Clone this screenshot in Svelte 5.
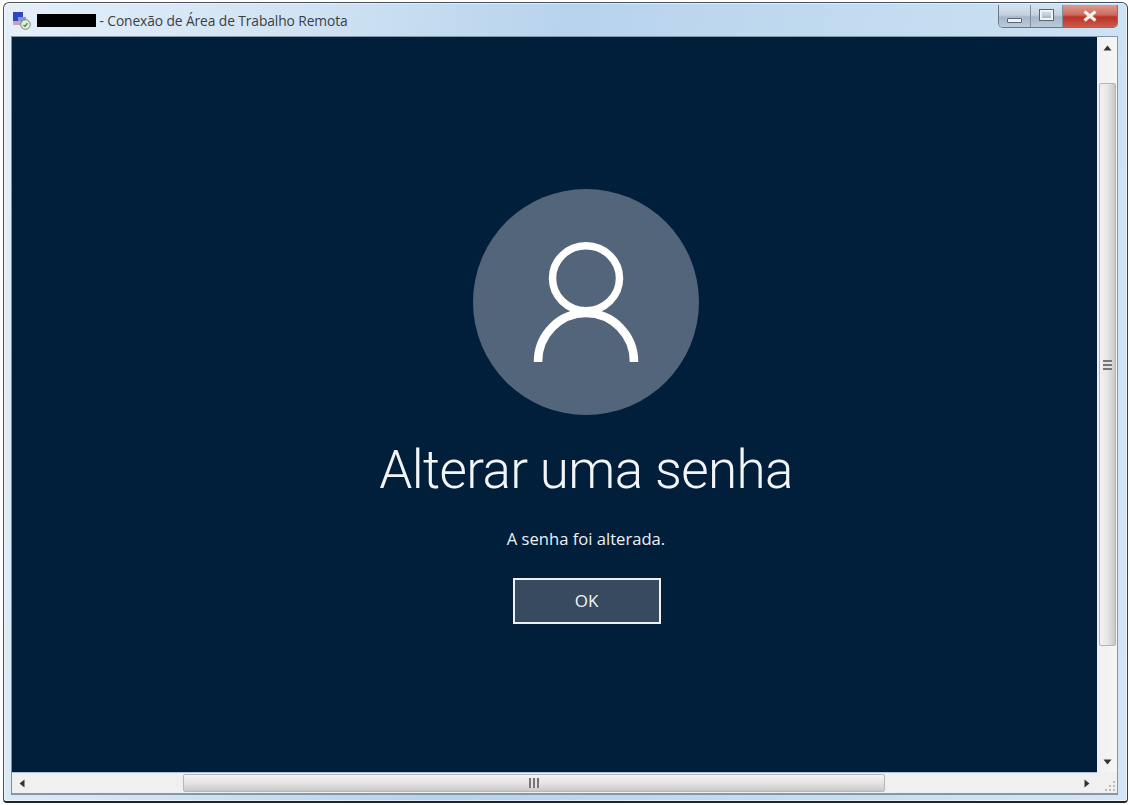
<script>
  let title = ' - Conexão de Área de Trabalho Remota';
</script>

<div class="page">
  <div class="window">
    <div class="titlebar">
      <svg class="app-icon" width="18" height="18" viewBox="0 0 18 18">
        <rect x="0" y="0" width="10" height="12" fill="#2f45c4"/>
        <rect x="5" y="5" width="8" height="6" fill="#7f93d8"/>
        <rect x="0" y="9" width="8" height="4" fill="#c9a0b8"/>
        <circle cx="12.500" cy="12.500" r="4.800" fill="#e4ebdc" stroke="#76866e"/>
        <path d="M10.500 13l1.500 1.200 2.500-3" fill="none" stroke="#2f9a3c" stroke-width="1.400"/>
      </svg>
      <span class="redacted"></span>
      <span class="title">{title}</span>
      <div class="controls">
        <div class="ctl min">
          <span class="min-glyph"></span>
        </div>
        <div class="ctl max">
          <span class="max-glyph"></span>
        </div>
        <div class="ctl close">
          <svg width="16" height="12" viewBox="0 0 16 12">
            <path d="M2.500 1.500L13.500 10.500M13.500 1.500L2.500 10.500" stroke="#f4f0ee" stroke-width="3.200"/>
          </svg>
        </div>
      </div>
    </div>

    <div class="body">
      <main class="client">
        <div class="avatar">
          <svg width="106" height="120" viewBox="0 0 106 120">
            <ellipse cx="53" cy="36.300" rx="33.500" ry="32.500" fill="none" stroke="#fff" stroke-width="7.500"/>
            <path d="M5 120A48 49 0 0 1 101 120" fill="none" stroke="#fff" stroke-width="8.500"/>
          </svg>
        </div>
        <h1>Alterar uma senha</h1>
        <p>A senha foi alterada.</p>
        <button>OK</button>
      </main>

      <div class="vscroll">
        <svg class="arrow" width="9" height="6" viewBox="0 0 9 6"><path d="M4.500 0.500L8.500 5.500H0.500Z" fill="#333"/></svg>
        <div class="vtrack">
          <div class="vthumb"><span class="grip-v"></span></div>
        </div>
        <svg class="arrow" width="9" height="6" viewBox="0 0 9 6"><path d="M0.500 0.500H8.500L4.500 5.500Z" fill="#333"/></svg>
      </div>

      <div class="hscroll">
        <svg class="arrow" width="6" height="9" viewBox="0 0 6 9"><path d="M5.500 0.500V8.500L0.500 4.500Z" fill="#333"/></svg>
        <div class="htrack">
          <div class="hthumb"><span class="grip-h"></span></div>
        </div>
        <svg class="arrow" width="6" height="9" viewBox="0 0 6 9"><path d="M0.500 0.500V8.500L5.500 4.500Z" fill="#333"/></svg>
      </div>

      <div class="corner">
        <svg width="12" height="12" viewBox="0 0 12 12">
          <g fill="#bcbcbc">
            <rect x="9" y="1" width="2" height="2"/>
            <rect x="5" y="5" width="2" height="2"/>
            <rect x="9" y="5" width="2" height="2"/>
            <rect x="1" y="9" width="2" height="2"/>
            <rect x="5" y="9" width="2" height="2"/>
            <rect x="9" y="9" width="2" height="2"/>
          </g>
        </svg>
      </div>
    </div>
  </div>
</div>

<style>
  :global(body) {
    margin: 0;
    background: #fff;
  }

  .page {
    width: 1130px;
    height: 805px;
    padding: 2px 2px 2px 3px;
    box-sizing: border-box;
  }

  .window {
    height: 100%;
    box-sizing: border-box;
    border: 1px solid #4a5058;
    border-right-color: #39424c;
    border-bottom: 2px solid #20242a;
    border-radius: 6px 6px 4px 4px;
    background: linear-gradient(100deg, #e4eff9 0%, #cfe2f3 25%, #b7d3ec 45%, #c8dff2 80%, #d5e6f5 100%);
    display: flex;
    flex-direction: column;
    padding: 0 9px 6px 7px;
    box-shadow: inset 0 0 0 1px rgba(255, 255, 255, 0.55);
  }

  .titlebar {
    height: 33px;
    flex: none;
    display: flex;
    align-items: center;
    font: 14px "Open Sans", "Liberation Sans", sans-serif;
    color: #3a3f44;
    padding-top: 2px;
    box-sizing: border-box;
  }

  .app-icon {
    margin-right: 6px;
    margin-left: 2px;
  }

  .redacted {
    width: 59px;
    height: 13px;
    background: #000;
    flex: none;
  }

  .title {
    white-space: pre;
    font-size: 13.800px;
    letter-spacing: -0.1px;
  }

  .controls {
    margin-left: auto;
    align-self: flex-start;
    display: flex;
    height: 22px;
    border: 1px solid #6a7784;
    border-top: none;
    border-radius: 0 0 5px 5px;
    overflow: hidden;
  }

  .ctl {
    display: flex;
    align-items: center;
    justify-content: center;
    height: 100%;
    box-sizing: border-box;
  }

  .min,
  .max {
    width: 32px;
    background: linear-gradient(#d6e3ef 0%, #c2d2e1 45%, #a4b6c8 55%, #bccbd9 100%);
    border-right: 1px solid #7f8e9c;
  }

  .close {
    width: 54px;
    background: linear-gradient(#dc9c8f 0%, #cf6a5d 45%, #bb3226 55%, #cc5a4b 100%);
  }

  .min-glyph {
    width: 13px;
    height: 3px;
    margin-top: 8px;
    background: #f0f3f6;
    border: 1px solid #5a6672;
    border-radius: 1px;
  }

  .max-glyph {
    width: 9px;
    height: 6px;
    border: 2px solid #f0f3f6;
    outline: 1px solid #5a6672;
    margin-top: -2px;
  }

  .body {
    flex: 1;
    min-height: 0;
    display: grid;
    grid-template-columns: 1fr 20px;
    grid-template-rows: 1fr 22px;
    border: 1px solid #8496a8;
    border-left-color: #7d8d9c;
    background: #f0f0f0;
  }

  /* the session is wider than the window, so the login panel sits right of centre */
  .client {
    background: #011e3a;
    display: flex;
    flex-direction: column;
    align-items: center;
    color: #fff;
    font-family: "Open Sans", "Liberation Sans", sans-serif;
    min-width: 0;
    min-height: 0;
    overflow: hidden;
    padding-left: 63px;
    box-sizing: border-box;
  }

  .avatar {
    width: 226px;
    height: 226px;
    margin-top: 152px;
    border-radius: 50%;
    background: #53657a;
    display: flex;
    justify-content: center;
    padding-top: 53px;
    box-sizing: border-box;
    flex: none;
  }

  h1 {
    margin: 20px 0 0;
    font-family: Roboto, "Open Sans", sans-serif;
    font-weight: 300;
    font-size: 53px;
    letter-spacing: -0.6px;
    line-height: 70px;
    color: #f2f5f8;
    white-space: nowrap;
  }

  p {
    margin: 23px 0 0;
    font-size: 16.600px;
    line-height: 22px;
    color: #eef1f4;
  }

  button {
    margin-top: 28px;
    margin-left: 1px;
    width: 148px;
    height: 46px;
    box-sizing: border-box;
    border: 2px solid #eef1f4;
    background: #374a5f;
    color: #f2f4f6;
    font: 17px "Open Sans", "Liberation Sans", sans-serif;
    padding: 0 0 1px;
  }

  .vscroll {
    background: linear-gradient(90deg, #f0f0f0, #f6f6f6);
    display: flex;
    flex-direction: column;
    align-items: center;
    padding: 8px 0 7px;
    box-sizing: border-box;
    min-height: 0;
  }

  .vtrack {
    flex: 1;
    width: 100%;
    padding: 32px 1px 113px 2px;
    box-sizing: border-box;
  }

  .vthumb {
    height: 100%;
    box-sizing: border-box;
    border: 1px solid #b4b4b4;
    border-radius: 2px;
    background: linear-gradient(90deg, #f2f2f2 0%, #e6e6e6 50%, #c8c8c8 100%);
    display: flex;
    align-items: center;
    justify-content: center;
  }

  .grip-v {
    width: 9px;
    height: 10px;
    background: repeating-linear-gradient(#777 0 2px, #e4e4e4 2px 4px);
  }

  .hscroll {
    background: #f0f0f0;
    display: flex;
    align-items: center;
    padding: 0 7px 0 7px;
    box-sizing: border-box;
    border-top: 1px solid #a9c3dc;
    border-bottom: 1px solid #8e959c;
    min-width: 0;
  }

  .htrack {
    flex: 1;
    height: 100%;
    padding: 1px 199px 1px 158px;
    box-sizing: border-box;
  }

  .hthumb {
    height: 100%;
    box-sizing: border-box;
    border: 1px solid #b8b8b8;
    border-radius: 2px;
    background: linear-gradient(#f4f4f4 0%, #e4e4e4 50%, #c9c9c9 100%);
    display: flex;
    align-items: center;
    justify-content: center;
  }

  .grip-h {
    width: 11px;
    height: 10px;
    background: repeating-linear-gradient(90deg, #777 0 2.500px, #e4e4e4 2.500px 4px);
  }

  .corner {
    background: #f0f0f0;
    border-bottom: 1px solid #8e959c;
    border-top: 1px solid #f0f0f0;
    display: flex;
    align-items: flex-end;
    justify-content: flex-end;
    padding: 0 1px 1px 0;
  }
</style>
